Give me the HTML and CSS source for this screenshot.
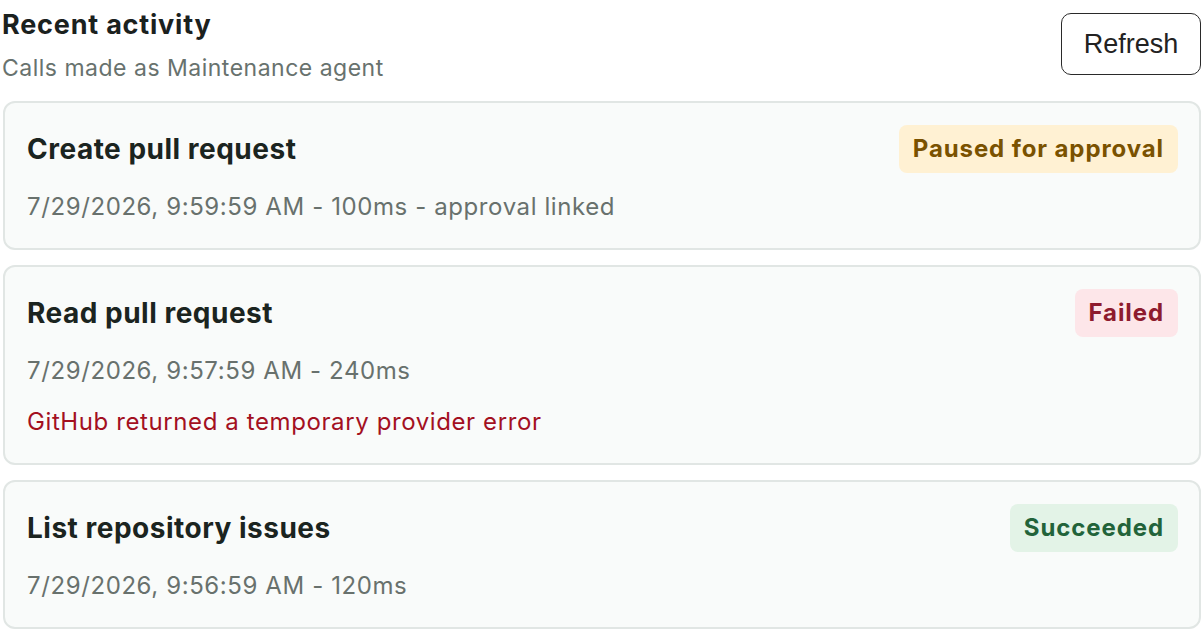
FILE: index.html
```html
<!DOCTYPE html>
<html lang="en">
<head>
  <meta charset="UTF-8">
  <title>Recent activity</title>
  <link rel="stylesheet" href="styles.css">
</head>
<body>
  <div class="activity">
    <div class="activity-head">
      <div>
        <h2 class="activity-title">Recent activity</h2>
        <p class="activity-sub">Calls made as Maintenance agent</p>
      </div>
      <button class="refresh-btn" type="button">Refresh</button>
    </div>

    <!-- activity list -->
    <div class="activity-list">
      <div class="call-card">
        <div class="call-top">
          <h3 class="call-name">Create pull request</h3>
          <span class="badge badge-paused">Paused for approval</span>
        </div>
        <p class="call-meta">7/29/2026, 9:59:59 AM - 100ms - approval linked</p>
      </div>

      <div class="call-card">
        <div class="call-top">
          <h3 class="call-name">Read pull request</h3>
          <span class="badge badge-failed">Failed</span>
        </div>
        <p class="call-meta">7/29/2026, 9:57:59 AM - 240ms</p>
        <p class="call-error">GitHub returned a temporary provider error</p>
      </div>

      <div class="call-card">
        <div class="call-top">
          <h3 class="call-name">List repository issues</h3>
          <span class="badge badge-ok">Succeeded</span>
        </div>
        <p class="call-meta">7/29/2026, 9:56:59 AM - 120ms</p>
      </div>
    </div>
  </div>
</body>
</html>
```

FILE: styles.css
```css
body {
  margin: 0;
  padding: 0 3px 0 2px;
  background-color: #ffffff;
  font-family: Inter, "Noto Sans", sans-serif;
  color: #1b211e;
}
.activity-head {
  display: flex;
  justify-content: space-between;
  align-items: flex-start;
  padding-top: 9px;
  margin-bottom: 18px;
}
.activity-title {
  margin: 0;
  font-size: 27px;
  line-height: 32px;
  font-weight: 700;
  letter-spacing: 0.8px;
}
.activity-sub {
  margin: 12px 0 0;
  font-size: 23px;
  line-height: 30px;
  letter-spacing: 0.5px;
  color: #68726e;
}
.refresh-btn {
  margin-top: 4px;
  width: 140px;
  height: 62px;
  background-color: #ffffff;
  border: 1.5px solid #2a2a2a;
  border-radius: 10px;
  font-family: "Liberation Sans", Arial, sans-serif;
  font-size: 27px;
  color: #222222;
  cursor: pointer;
}
.activity-list {
  display: flex;
  flex-direction: column;
  gap: 15px;
  padding-left: 1px;
}
.call-card {
  background-color: #f9fbfa;
  border: 2px solid #e1e6e4;
  border-radius: 12px;
  padding: 22px 21px 23px 22px;
}
.call-top {
  display: flex;
  justify-content: space-between;
  align-items: center;
  height: 48px;
  margin-bottom: 16px;
}
.call-name {
  margin: 0;
  font-size: 28px;
  font-weight: 700;
  letter-spacing: 0.5px;
  color: #1b2420;
}
.call-meta {
  margin: 0;
  font-size: 24px;
  line-height: 36px;
  letter-spacing: 0.6px;
  color: #68716d;
}
.call-error {
  margin: 15px 0 0;
  font-size: 24px;
  line-height: 36px;
  letter-spacing: 0.6px;
  color: #a3101f;
}
.badge {
  display: inline-block;
  height: 48px;
  line-height: 48px;
  padding: 0 14px;
  border-radius: 8px;
  font-size: 24px;
  font-weight: 700;
  letter-spacing: 0.9px;
}
.badge-paused {
  background-color: #fff1d3;
  color: #7a5200;
}
.badge-failed {
  background-color: #fde6e9;
  color: #8e1b2e;
}
.badge-ok {
  background-color: #e3f3e7;
  color: #22633a;
}
```
